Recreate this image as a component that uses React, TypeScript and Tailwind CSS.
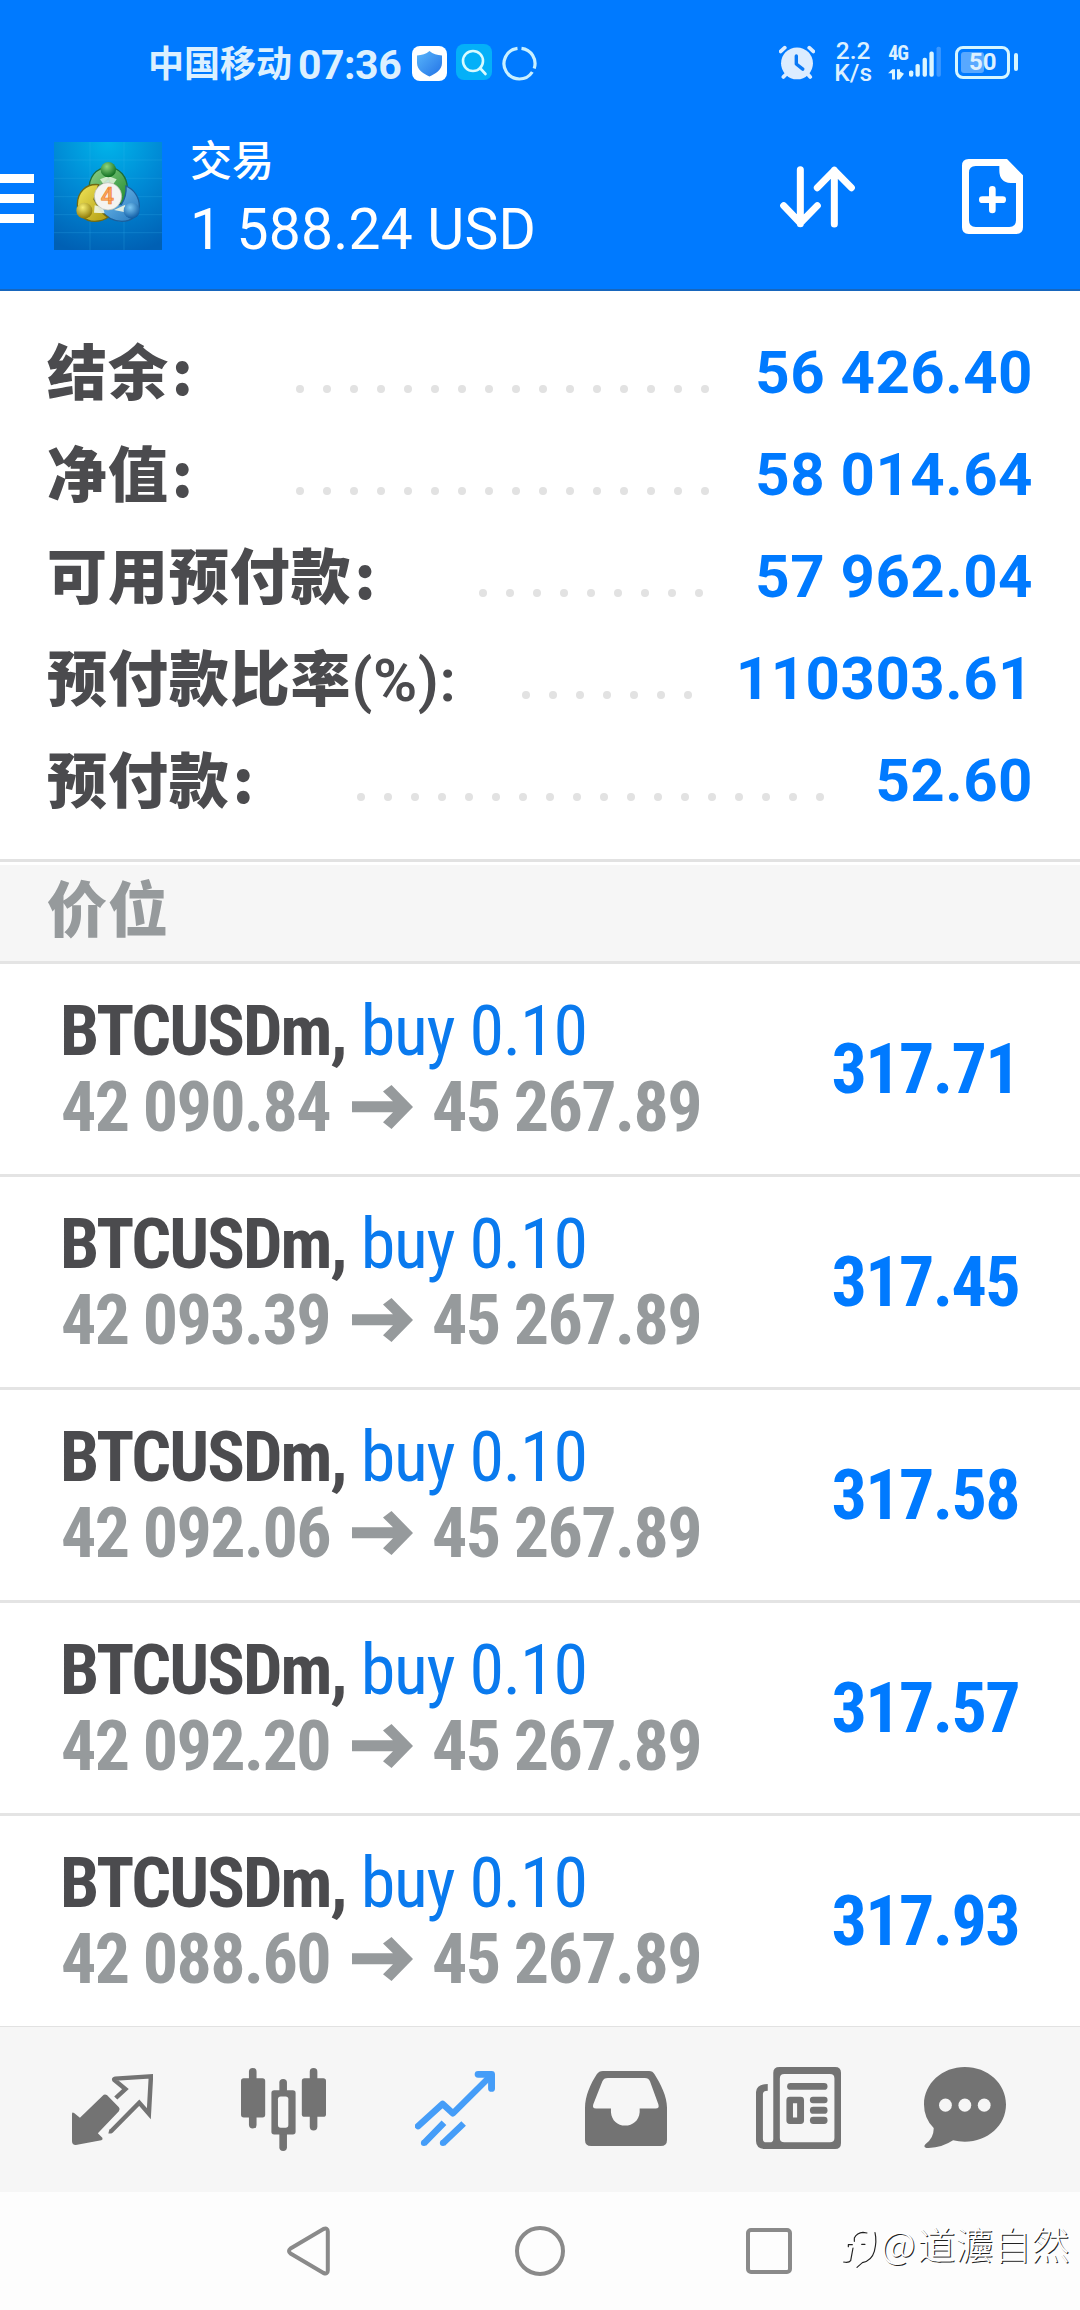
import React from "react";

const CJK = "font-['Noto_Sans_CJK_SC',sans-serif]";
const ROBOTO = "font-[Roboto,sans-serif]";
const CONDENSED = "font-['Roboto_Condensed',Roboto,sans-serif]";

type SummaryItem = {
  label: string;
  suffix?: string;
  value: string;
  dots: number;
  gap: string;
};

const summary: SummaryItem[] = [
  { label: "结余", value: "56 426.40", dots: 16, gap: "mr-[46px]" },
  { label: "净值", value: "58 014.64", dots: 16, gap: "mr-[46px]" },
  { label: "可用预付款", value: "57 962.04", dots: 9, gap: "mr-[52px]" },
  { label: "预付款比率", suffix: "(%):", value: "110303.61", dots: 7, gap: "mr-[44px]" },
  { label: "预付款", value: "52.60", dots: 18, gap: "mr-[51px]" },
];

const positions = [
  { open: "42 090.84", profit: "317.71" },
  { open: "42 093.39", profit: "317.45" },
  { open: "42 092.06", profit: "317.58" },
  { open: "42 092.20", profit: "317.57" },
  { open: "42 088.60", profit: "317.93" },
];

function StatusBar() {
  return (
    <div className="flex h-[126px] items-center pl-[148px] text-[#dcf0ff]">
      <span className={`${CJK} -mt-[4px] text-[36px] leading-[40px] font-bold`}>中国移动</span>
      <span className={`${ROBOTO} mt-[3px] ml-[6px] text-[41px] leading-[40px] font-bold tracking-[-0.5px]`}>07:36</span>
      <svg className="ml-[11px] h-[35px] w-[35px]" viewBox="0 0 35 35">
        <defs>
          <linearGradient id="shield" x1="0" y1="0" x2="1" y2="1">
            <stop offset="0" stopColor="#59b6fb" />
            <stop offset="1" stopColor="#2272e6" />
          </linearGradient>
        </defs>
        <rect width="35" height="35" rx="8" fill="#fff" />
        <path d="M17.5 5C21 8 25 9 30 9.500V17C30 24 23 28 17.500 30.500C12 28 5 24 5 17V9.500C10 9 14 8 17.500 5Z" fill="url(#shield)" />
      </svg>
      <svg className="-mt-[2px] ml-[9px] h-[36px] w-[36px]" viewBox="0 0 36 36">
        <rect width="36" height="36" rx="8" fill="#04b0f8" />
        <circle cx="17" cy="17" r="10" fill="none" stroke="#d8fbff" strokeWidth="2.600" />
        <path d="M24 24L29.500 30" stroke="#d8fbff" strokeWidth="2.600" strokeLinecap="round" />
      </svg>
      <svg className="ml-[10px] h-[35px] w-[35px]" viewBox="0 0 35 35">
        <g fill="none" stroke="#c9f0ff" strokeWidth="3.200">
          <path d="M19.500 2.300A15.400 15.400 0 0 1 32.200 22.500" />
          <path d="M30.300 26A15.400 15.400 0 1 1 15.500 2.300" />
        </g>
      </svg>

      <svg className="-mt-[2px] ml-[242px] h-[35px] w-[36px]" viewBox="120 135 106 101">
        <circle cx="173" cy="188" r="47" fill="#dcecff" />
        <g stroke="#dcecff" strokeWidth="11" strokeLinecap="round" fill="none">
          <path d="M125 153L137 142M221 153L209 142M141 220L133 228M205 220L212 228" />
        </g>
        <path d="M171 166V190L190 205" stroke="#0a78f5" strokeWidth="10" strokeLinecap="round" strokeLinejoin="round" fill="none" />
      </svg>
      <div className={`${ROBOTO} -mt-[2px] ml-[19px] w-[38px] text-center text-[24.500px] leading-[22px] font-medium`}>
        <div>2.2</div>
        <div>K/s</div>
      </div>
      <div className="-mt-px ml-[16px] flex h-[35px] w-[53px]">
        <div className="flex flex-col justify-between">
          <span className={`${CONDENSED} h-[16px] text-[20px] leading-[17px] font-bold tracking-[-1px]`}>4G</span>
          <svg className="h-[11px] w-[16px]" viewBox="449 203 48 32">
            <path d="M449 215L462 203H470V234H461V215ZM476 203H485V210L497 217L484 234H476Z" fill="#dcf6ff" />
          </svg>
        </div>
        <svg className="ml-[1px] h-[33px] w-[35px]" viewBox="506 136 104 98">
          <g fill="#dcf6ff">
            <rect x="506" y="214" width="14" height="20" rx="6" />
            <rect x="527" y="193" width="14" height="41" rx="6" />
            <rect x="550" y="173" width="14" height="61" rx="6" />
            <rect x="572" y="153" width="14" height="81" rx="6" />
          </g>
          <rect x="595" y="137" width="14" height="97" rx="6" fill="#3c98ff" />
        </svg>
      </div>
      <div className="-mt-[2px] ml-[14px] flex items-center">
        <div className="relative h-[33px] w-[55px] rounded-[8px] border-[3px] border-[#d6f6ff] p-[3px]">
          <div className="h-[21px] w-[23px] rounded-[3px] bg-[#58a8ff]" />
          <span className={`${ROBOTO} absolute inset-0 text-center text-[24px] leading-[27px] font-bold`}>50</span>
        </div>
        <div className="ml-[4px] h-[18px] w-[4px] rounded-[2px] bg-[#d6f6ff]" />
      </div>
    </div>
  );
}

function AppLogo() {
  return (
    <svg className="mt-[16px] ml-[20px] h-[108px] w-[108px]" viewBox="12 18 324 324">
      <defs>
        <radialGradient id="bg" cx="0.5" cy="0" r="1.050">
          <stop offset="0" stopColor="#00b4ea" />
          <stop offset="0.500" stopColor="#0088d4" />
          <stop offset="1" stopColor="#0060b4" />
        </radialGradient>
        <linearGradient id="green" x1="0" y1="0" x2="1" y2="1">
          <stop offset="0" stopColor="#8fd08a" />
          <stop offset="1" stopColor="#1f8a2c" />
        </linearGradient>
        <linearGradient id="yellow" x1="0" y1="0" x2="1" y2="1">
          <stop offset="0" stopColor="#f2e75a" />
          <stop offset="1" stopColor="#b09a10" />
        </linearGradient>
        <linearGradient id="blue" x1="0" y1="0" x2="1" y2="1">
          <stop offset="0" stopColor="#7cc4f0" />
          <stop offset="1" stopColor="#2478bf" />
        </linearGradient>
        <radialGradient id="greenHead" cx="0.4" cy="0.3" r="0.7">
          <stop offset="0" stopColor="#8fd67f" />
          <stop offset="1" stopColor="#0f6e20" />
        </radialGradient>
        <radialGradient id="yellowHead" cx="0.4" cy="0.3" r="0.7">
          <stop offset="0" stopColor="#f8ef72" />
          <stop offset="1" stopColor="#8f7a08" />
        </radialGradient>
        <radialGradient id="blueHead" cx="0.4" cy="0.3" r="0.7">
          <stop offset="0" stopColor="#7cc8f4" />
          <stop offset="1" stopColor="#0f5ca4" />
        </radialGradient>
      </defs>
      <rect x="12" y="18" width="324" height="324" fill="url(#bg)" />
      <path d="M12 72H336M12 127H336M12 182H336M12 236H336M12 290H336M120 18V342M222 18V342" stroke="#37b4ee" strokeOpacity="0.35" strokeWidth="2" />
      <path d="M118 165C114 125 138 94 175 94C210 94 232 124 232 158C232 176 226 192 214 204L194 186L176 128L150 150Z" fill="url(#green)" stroke="#1c6e3a" strokeWidth="4" />
      <path d="M228 150C252 160 268 184 268 210C266 238 244 256 216 256C188 256 166 242 150 218L176 206L214 206C224 190 230 172 228 150Z" fill="url(#blue)" stroke="#1b5f9c" strokeWidth="4" />
      <path d="M146 146C108 142 82 168 82 206C84 238 106 256 134 256C150 256 164 252 174 244C162 236 152 226 146 214L132 190Z" fill="url(#yellow)" stroke="#6f6a14" strokeWidth="4" />
      <path d="M134 208L158 214L164 232L132 230ZM192 222L226 206L222 228Z" fill="#eef6e4" fillOpacity="0.9" />
      <path d="M150 130L175 120L200 130L190 144H160Z" fill="#e2f5dc" fillOpacity="0.85" />
      <circle cx="175" cy="101" r="23" fill="url(#greenHead)" />
      <circle cx="103" cy="224" r="24" fill="url(#yellowHead)" />
      <circle cx="245" cy="224" r="24" fill="url(#blueHead)" />
      <circle cx="174" cy="181" r="41" fill="#f4f3f0" stroke="#b9bcae" strokeWidth="2" />
      <text x="172" y="204" textAnchor="middle" fontFamily="Roboto" fontWeight="500" fontSize="70" fill="#f9a95c" stroke="#f08030" strokeWidth="2">4</text>
    </svg>
  );
}

function Toolbar() {
  return (
    <div className="flex h-[163px] items-start text-white">
      <div className="mt-[48px] flex w-[34px] flex-col gap-[11px]">
        <div className="h-[9px] bg-white" />
        <div className="h-[9px] bg-white" />
        <div className="h-[9px] bg-white" />
      </div>
      <AppLogo />
      <div className="ml-[28px] w-[420px] pt-px whitespace-nowrap">
        <div className={`${CJK} text-[42px] leading-[61px] font-medium`}>交易</div>
        <div className={`${ROBOTO} text-[57px] leading-[83px] tracking-[0.2px]`}>1 588.24 USD</div>
      </div>
      <svg className="mt-[40px] ml-[170px] h-[62px] w-[75px]" viewBox="120 497 225 186">
        <g fill="none" stroke="#fff" strokeWidth="21" strokeLinecap="round" strokeLinejoin="round">
          <path d="M181 508V670M131 616L181 668L232 616" />
          <path d="M283 671V510M232 562L283 510L334 562" />
        </g>
      </svg>
      <svg className="mt-[33px] ml-[107px] h-[75px] w-[61px]" viewBox="666 477 183 225">
        <path
          fillRule="evenodd"
          fill="#fff"
          d="M686 477H801L849 526V682Q849 702 829 702H686Q666 702 666 682V497Q666 477 686 477ZM707 498Q687 498 687 518V661Q687 681 707 681H808Q828 681 828 661V549H812Q778 546 778 512V498Z"
        />
        <path d="M757 568V630M727 599H788" stroke="#fff" strokeWidth="20" strokeLinecap="round" />
      </svg>
    </div>
  );
}

function SummaryRow({ item }: { item: SummaryItem }) {
  return (
    <div className="flex h-[102px] items-baseline pr-[47px] pl-[47px] text-[60px] leading-[102px] whitespace-nowrap">
      <span className={`${CJK} mr-auto translate-y-[2px] font-black tracking-[0.9px] text-[#4b4b4e]`}>
        {item.label}
        {item.suffix ? (
          <span className={`${ROBOTO} font-semibold tracking-[0.6px]`}>{item.suffix}</span>
        ) : (
          <span className="ml-[3px]">:</span>
        )}
      </span>
      <span className={`flex gap-[19px] ${item.gap}`}>
        {Array.from({ length: item.dots }, (_, i) => (
          <i key={i} className="block h-[8px] w-[8px] rounded-full bg-[#e2e2e2]" />
        ))}
      </span>
      <span className={`${ROBOTO} font-bold tracking-[0.5px] text-[#007aff]`}>{item.value}</span>
    </div>
  );
}

function PositionRow({ open, profit }: { open: string; profit: string }) {
  return (
    <div className={`${CONDENSED} flex h-[213px] items-center border-t-[3px] border-[#e4e4e4] pr-[61px] pl-[60px] text-[70px] whitespace-nowrap`}>
      <div className="flex-1 self-start pt-[29px] leading-[76px]">
        <div>
          <span className="font-bold tracking-[-2px] text-[#4b4b4e]">BTCUSDm,</span>{" "}
          <span className="-ml-px tracking-[-1.2px] text-[#0a7aee]">buy 0.10</span>
        </div>
        <div className="flex items-center font-bold tracking-[-1.7px] text-[#969a9c]">
          <span className="w-[292px] pl-px">{open}</span>
          <svg className="h-[44px] w-[61px]" viewBox="0 0 61 44">
            <path d="M0 16.300H41L31 6.500L39.500 0L61 22L39.500 44L31 37.200L41 27.300H0Z" fill="#969a9c" />
          </svg>
          <span className="ml-[19px]">45 267.89</span>
        </div>
      </div>
      <span className="font-bold tracking-[-1.6px] text-[#007aff]">{profit}</span>
    </div>
  );
}

function QuotesIcon() {
  return (
    <svg className="h-[71px] w-[81px]" viewBox="209 162 235 213" preserveAspectRatio="none">
      <path d="M209 281Q210 274 216 280L232 293L298 227Q304 220 311 226L345 262Q350 268 345 274L284 340L297 353Q300 358 294 361L220 375Q209 375 209 364Z" fill="#737373" />
      <path d="M336 234L364 207L332 180Q330 177 335 176L438 169L432 281L404 248L324 332Q320 335 316 334" fill="none" stroke="#737373" strokeWidth="13" />
    </svg>
  );
}

function CandlesIcon() {
  return (
    <svg className="h-[83px] w-[85px]" viewBox="699 142 246 250" preserveAspectRatio="none">
      <g fill="#737373">
        <rect x="722" y="142" width="22" height="182" rx="11" />
        <rect x="699" y="173" width="70" height="118" rx="8" />
        <rect x="898" y="142" width="22" height="188" rx="11" />
        <rect x="875" y="173" width="70" height="116" rx="8" />
        <rect x="810" y="175" width="22" height="217" rx="11" />
        <rect x="787" y="209" width="70" height="133" rx="8" />
      </g>
      <rect x="806" y="228" width="30" height="94" rx="8" fill="#f6f6f6" />
    </svg>
  );
}

function TradeIcon() {
  return (
    <svg className="h-[75px] w-[80px] -translate-y-[1px]" viewBox="1202 152 232 223" preserveAspectRatio="none">
      <g fill="none" stroke="#459df8" strokeWidth="19" strokeLinecap="round" strokeLinejoin="round">
        <path d="M1211 316L1282 250L1312 278L1420 168" />
        <path d="M1385 162H1424V204" strokeWidth="20" />
      </g>
      <path d="M1228 367L1286 306M1283 367L1343 308" fill="none" stroke="#459df8" strokeWidth="19" />
      <circle cx="1228" cy="366" r="9" fill="#459df8" />
      <circle cx="1283" cy="366" r="9" fill="#459df8" />
    </svg>
  );
}

function HistoryIcon() {
  return (
    <svg className="h-[75px] w-[82px] -translate-y-[1px]" viewBox="132 152 237 224" preserveAspectRatio="none">
      <path
        fillRule="evenodd"
        fill="#737373"
        d="M184 152H317Q328 152 333 162C350 190 369 228 369 262V358Q369 376 351 376H150Q132 376 132 358V262C132 228 148 190 166 162Q172 152 184 152ZM198 173Q186 173 182 183L156 251Q152 264 164 264H207V275C209 300 226 315 248 315C270 315 288 300 290 275V264H336Q348 264 344 251L320 183Q316 173 305 173Z"
      />
    </svg>
  );
}

function NewsIcon() {
  return (
    <svg className="h-[82px] w-[85px] translate-x-[2px] -translate-y-[2px]" viewBox="628 141 246 245" preserveAspectRatio="none">
      <path
        fillRule="evenodd"
        fill="#737373"
        d="M696 141H857Q874 141 874 158V368Q874 386 857 386H652Q628 384 628 362V216Q630 192 662 192V212Q648 212 648 222V356Q648 366 658 366H668Q678 366 678 356V158Q678 141 696 141ZM710 162Q697 162 697 175V353Q697 366 710 366H842Q855 366 855 353V175Q855 162 842 162Z"
      />
      <g fill="#737373">
        <rect x="718" y="189" width="117" height="20" rx="10" />
        <rect x="784" y="230" width="51" height="19" rx="9" />
        <rect x="784" y="260" width="51" height="21" rx="10" />
        <rect x="784" y="290" width="51" height="21" rx="10" />
        <path fillRule="evenodd" d="M726 230H757Q767 230 767 240V301Q767 311 757 311H726Q716 311 716 301V240Q716 230 726 230ZM735 249V292H747V249Z" />
      </g>
    </svg>
  );
}

function ChatIcon() {
  return (
    <svg className="h-[81px] w-[82px] -translate-x-[3px] -translate-y-[2px]" viewBox="1116 141 237 244" preserveAspectRatio="none">
      <path
        fill="#737373"
        d="M1234 141C1300 141 1353 190 1353 254C1353 317 1300 366 1234 366Q1216 366 1200 362Q1166 386 1123 385Q1113 382 1120 374Q1145 355 1144 325Q1116 296 1116 254C1116 190 1169 141 1234 141Z"
      />
      <g fill="#f6f6f6">
        <ellipse cx="1178" cy="256" rx="18.500" ry="20" />
        <ellipse cx="1234" cy="256" rx="18.500" ry="20" />
        <ellipse cx="1290" cy="256" rx="18.500" ry="20" />
      </g>
    </svg>
  );
}

const tabs = [QuotesIcon, CandlesIcon, TradeIcon, HistoryIcon, NewsIcon, ChatIcon];

function SystemNav() {
  return (
    <div className="relative flex h-[118px] items-center bg-[#fdfdfd] pl-[287px]">
      <svg className="h-[50px] w-[43px]" viewBox="0 0 43 50">
        <path d="M3.500 22.500Q0.500 25 3.500 27.500L36.500 47Q40.800 48.500 40.800 44.500V5.500Q40.800 1.500 36.500 3Z" fill="none" stroke="#8a8a8a" strokeWidth="4" strokeLinejoin="round" />
      </svg>
      <div className="ml-[185px] h-[50px] w-[50px] rounded-full border-[4.500px] border-[#8a8a8a]" />
      <div className="ml-[181px] h-[46px] w-[46px] rounded-[5px] border-[4.500px] border-[#8a8a8a]" />
      <div className="absolute top-[26px] left-[843px] flex items-center whitespace-nowrap">
        <svg className="mt-[11px] h-[38px] w-[34px] overflow-visible" viewBox="20 56 102 114">
          <g fill="none" stroke="#222" strokeWidth="3.500" strokeLinecap="round">
            <path d="M22 152Q38 155 43 148L50 110M36 100H48M36 106V100M54 80Q62 64 80 63L92 65M54 80V90M76 99H86M116 64Q122 90 114 120Q106 148 78 154L62 168" />
          </g>
        </svg>
        <span className={`${CJK} ml-[4px] text-[38px] leading-[50px] font-light text-white [text-shadow:1px_1px_0.5px_#222]`}>
          <span className="tracking-[2px]">@</span>道灋自然
        </span>
      </div>
    </div>
  );
}

export default function App() {
  return (
    <div className="flex h-[2310px] w-[1080px] flex-col overflow-hidden bg-white">
      <header className="border-b-2 border-[#1766bd] bg-[#007aff]">
        <StatusBar />
        <Toolbar />
      </header>
      <section className="h-[568px] shrink-0 pt-[25px]">
        {summary.map((item) => (
          <SummaryRow key={item.label} item={item} />
        ))}
      </section>
      <div className="h-[102px] shrink-0 border-t-[3px] border-[#e2e2e2] pt-[3px]">
        <div className={`${CJK} h-[96px] bg-[#f6f6f6] pl-[47px] text-[60px] leading-[82px] font-black tracking-[0.9px] text-[#969a9c]`}>价位</div>
      </div>
      <main className="h-[1065px] shrink-0">
        {positions.map((p) => (
          <PositionRow key={p.open} open={p.open} profit={p.profit} />
        ))}
      </main>
      <nav className="grid h-[166px] shrink-0 grid-cols-6 border-t border-[#e2e2e2] bg-[#f6f6f6] px-[27px]">
        {tabs.map((Icon, i) => (
          <div key={i} className="flex items-center justify-center">
            <Icon />
          </div>
        ))}
      </nav>
      <SystemNav />
    </div>
  );
}
